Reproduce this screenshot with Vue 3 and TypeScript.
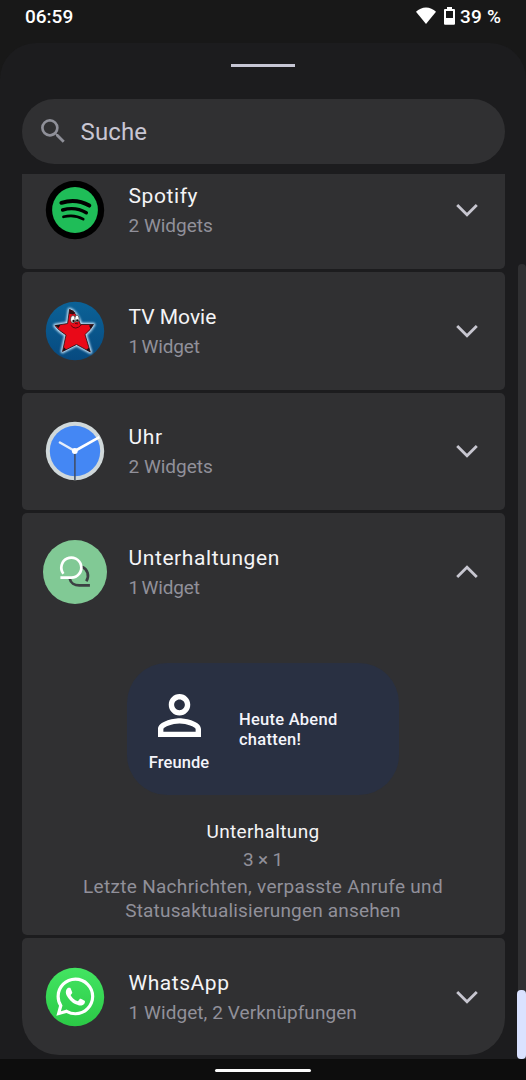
<script setup lang="ts">
interface AppEntry {
  id: 'spotify' | 'tv' | 'clock' | 'chat' | 'whatsapp'
  name: string
  summary: string
  single?: boolean
  open?: boolean
}

const apps: AppEntry[] = [
  { id: 'spotify', name: 'Spotify', summary: '2 Widgets' },
  { id: 'tv', name: 'TV Movie', summary: '1 Widget', single: true },
  { id: 'clock', name: 'Uhr', summary: '2 Widgets' },
  { id: 'chat', name: 'Unterhaltungen', summary: '1 Widget', single: true, open: true },
  { id: 'whatsapp', name: 'WhatsApp', summary: '1 Widget, 2 Verknüpfungen' },
]
</script>

<template>
  <div class="screen">
    <header class="status">
      <span class="time">06:59</span>
      <svg class="wifi" viewBox="0 0 20 17"><path d="M10 17 0 4.700C2.800 2 6.200 .4 10 .4S17.200 2 20 4.700z" /></svg>
      <svg class="battery" viewBox="0 0 11 18">
        <path fill-rule="evenodd" d="M3 0h5v2h2a1 1 0 0 1 1 1v13.700a1 1 0 0 1-1 1H1a1 1 0 0 1-1-1V3a1 1 0 0 1 1-1h2zM2 4v7h7V4z" />
      </svg>
      <span class="percent">39 %</span>
    </header>

    <main class="sheet">
      <div class="handle"></div>
      <div class="search">
        <svg viewBox="0 0 24 24"><path d="M15.500 14h-.79l-.28-.27A6.471 6.471 0 0 0 16 9.500 6.500 6.500 0 1 0 9.500 16c1.610 0 3.090-.59 4.230-1.570l.27.28v.79l5 4.990L20.490 19zm-6 0C7.010 14 5 11.990 5 9.500S7.010 5 9.500 5 14 7.010 14 9.500 11.990 14 9.500 14" /></svg>
        <span>Suche</span>
      </div>

      <div class="list">
        <section v-for="app in apps" :key="app.id" class="card" :class="[app.id, { open: app.open }]">
          <div class="row">
            <div class="icon">
              <svg v-if="app.id === 'spotify'" width="60" height="60" viewBox="0 0 60 60">
                <circle cx="30" cy="30" r="29.200" fill="#000" />
                <circle cx="30" cy="30" r="22.900" fill="#1fbd58" />
                <g fill="none" stroke="#000" stroke-linecap="round">
                  <path d="M16.400 22.800Q31.500 18.200 44.300 25.600" stroke-width="4" />
                  <path d="M17.600 30Q30.500 26.300 41.300 32.800" stroke-width="3.400" />
                  <path d="M18.500 36.800Q29.500 34 38.200 39.200" stroke-width="2.700" />
                </g>
              </svg>
              <svg v-else-if="app.id === 'tv'" width="60" height="60" viewBox="0 0 60 60">
                <defs>
                  <linearGradient id="tvSky" x1="0" y1="0" x2="0" y2="1">
                    <stop offset="0" stop-color="#0b6297" /><stop offset="1" stop-color="#074a80" />
                  </linearGradient>
                  <filter id="tvGlow" x="-20%" y="-20%" width="140%" height="140%"><feGaussianBlur stdDeviation=".8" /></filter>
                </defs>
                <circle cx="30" cy="30" r="29.200" fill="url(#tvSky)" />
                <path d="M24.500 8.500Q31 10.500 35.500 23.500L48.500 23.500Q46 28.500 40 33.500L45.300 51 31.500 43.500 17.500 50.500 21 34Q13.500 29.500 10 24.500L22.600 22.500z" fill="#d9efff" stroke="#c6e5fa" stroke-width="3.600" stroke-linejoin="round" filter="url(#tvGlow)" />
                <path d="M24.500 8.500Q31 10.500 35.500 23.500L48.500 23.500Q46 28.500 40 33.500L45.300 51 31.500 43.500 17.500 50.500 21 34Q13.500 29.500 10 24.500L22.600 22.500z" fill="#e90918" stroke="#1a0c10" stroke-width=".8" stroke-linejoin="round" />
                <path d="m10.300 24 5 .1-1.800 3zM48.400 23.700l-4.400.7 1.600 3.200zM17.700 50.300l1.200-4 2.300 2.300zM45 50.700l-1.300-4-2.400 2z" fill="#141014" />
                <path d="M24.500 8.300q3.500.8 6 3.800l-2.600 1.300-4-1z" fill="#321014" />
                <ellipse cx="28" cy="18.300" rx="2.500" ry="3.800" fill="#fff" stroke="#111" stroke-width=".6" />
                <ellipse cx="32" cy="17.600" rx="2.100" ry="3.500" fill="#fff" stroke="#111" stroke-width=".6" />
                <circle cx="28.500" cy="20" r="1.200" fill="#111" /><circle cx="32.200" cy="19.400" r="1.100" fill="#111" />
                <path d="M25.700 24.200q4.600 6 11-.6M30 22.400l3 .5" fill="none" stroke="#5b0710" stroke-width="1" />
              </svg>
              <svg v-else-if="app.id === 'clock'" width="60" height="60" viewBox="0 0 60 60">
                <circle cx="30" cy="30" r="29.200" fill="#d0d8da" />
                <circle cx="30" cy="30" r="25.200" fill="#4487f4" />
                <path d="M29.900 30v29" stroke="#414c60" stroke-width="1.500" />
                <path d="M29.800 30 14.900 21.500" stroke="#e5edfa" stroke-width="2.500" stroke-linecap="round" />
                <path d="M29.800 30 54.400 16.200" stroke="#fff" stroke-width="2.600" />
                <circle cx="29.800" cy="30" r="2.900" fill="#fff" />
              </svg>
              <svg v-else-if="app.id === 'chat'" width="64" height="64" viewBox="0 0 64 64">
                <circle cx="32" cy="32" r="32" fill="#81c995" />
                <g fill="none" stroke-width="2.700">
                  <path d="M39 26.800A9.700 9.700 0 0 1 43.300 41.200M26.800 38.700C27.500 42.700 31.500 45.400 36.300 45.400H46.900" stroke="#3c4043" />
                  <path d="M20.400 33.700A10 10 0 1 1 28.300 37.600H17.400" stroke="#fff" />
                </g>
              </svg>
              <svg v-else width="60" height="60" viewBox="0 0 60 60">
                <defs>
                  <linearGradient id="waGreen" x1="0" y1="0" x2="0" y2="1">
                    <stop offset="0" stop-color="#43e562" /><stop offset="1" stop-color="#2bc946" />
                  </linearGradient>
                </defs>
                <circle cx="30" cy="30" r="29.200" fill="url(#waGreen)" />
                <path transform="translate(11.300 10.600) scale(1.585)" fill="#fff" d="M17.472 14.382c-.297-.149-1.758-.867-2.03-.967-.273-.099-.471-.148-.67.15-.197.297-.767.966-.94 1.164-.173.199-.347.223-.644.075-.297-.15-1.255-.463-2.39-1.475-.883-.788-1.48-1.761-1.653-2.059-.173-.297-.018-.458.13-.606.134-.133.298-.347.446-.52.149-.174.198-.298.298-.497.099-.198.05-.371-.025-.52-.075-.149-.669-1.612-.916-2.207-.242-.579-.487-.5-.669-.51-.173-.008-.371-.01-.57-.01-.198 0-.52.074-.792.372-.272.297-1.04 1.016-1.04 2.479 0 1.462 1.065 2.875 1.213 3.074.149.198 2.096 3.2 5.077 4.487.709.306 1.262.489 1.694.625.712.227 1.36.195 1.871.118.571-.085 1.758-.719 2.006-1.413.248-.694.248-1.289.173-1.413-.074-.124-.272-.198-.57-.347m-5.421 7.403h-.004a9.87 9.87 0 01-5.031-1.378l-.361-.214-3.741.982.998-3.648-.235-.374a9.86 9.86 0 01-1.51-5.26c.001-5.45 4.436-9.884 9.888-9.884 2.64 0 5.122 1.03 6.988 2.898a9.825 9.825 0 012.893 6.994c-.003 5.45-4.437 9.884-9.885 9.884m8.413-18.297A11.815 11.815 0 0012.05 0C5.495 0 .16 5.335.157 11.892c0 2.096.547 4.142 1.588 5.945L.057 24l6.305-1.654a11.882 11.882 0 005.683 1.448h.005c6.554 0 11.89-5.335 11.893-11.893a11.821 11.821 0 00-3.48-8.413Z" />
              </svg>
            </div>
            <div class="labels">
              <div class="name">{{ app.name }}</div>
              <div class="summary" :class="{ single: app.single }">{{ app.summary }}</div>
            </div>
            <svg class="chevron" :class="{ up: app.open }" viewBox="0 0 24 14">
              <path d="m2.200 2 9.800 9.700L21.800 2" />
            </svg>
          </div>

          <div v-if="app.open" class="details">
            <div class="preview">
              <div class="person">
                <svg viewBox="4 4 16 16"><path d="M12 6c1.100 0 2 .9 2 2s-.9 2-2 2-2-.9-2-2 .9-2 2-2m0 9c2.700 0 5.800 1.290 6 2v1H6v-.99c.2-.72 3.300-2.010 6-2.010m0-11C9.790 4 8 5.790 8 8s1.790 4 4 4 4-1.790 4-4-1.790-4-4-4zm0 9c-2.670 0-8 1.340-8 4v3h16v-3c0-2.660-5.330-4-8-4z" /></svg>
                <span>Freunde</span>
              </div>
              <p class="message">Heute Abend<br />chatten!</p>
            </div>
            <div class="widget-name">Unterhaltung</div>
            <div class="widget-size">3 × 1</div>
            <p class="widget-text">Letzte Nachrichten, verpasste Anrufe und<br /><span>Statusaktualisierungen ansehen</span></p>
          </div>
        </section>
      </div>
      <div class="track"></div>
      <div class="thumb"></div>
    </main>

    <footer class="nav"><div class="pill"></div></footer>
  </div>
</template>

<style>
body {
  margin: 0;
  background: #181818;
}
</style>

<style scoped>
.screen {
  width: 526px;
  height: 1080px;
  overflow: hidden;
  display: flex;
  flex-direction: column;
  background: #181818;
  color: #f4f4f6;
  font-family: Roboto, "Open Sans", sans-serif;
}
.status {
  height: 43px;
  flex: none;
  box-sizing: border-box;
  display: flex;
  align-items: flex-start;
  padding: 5px 25px 0;
  font-size: 19px;
  line-height: 23px;
  font-weight: 500;
  color: #fff;
}
.time {
  margin-right: auto;
}
.wifi {
  width: 20px;
  height: 17px;
  margin: 2px 8px 0 0;
  fill: #fff;
}
.battery {
  width: 11px;
  height: 18px;
  margin: 2px 5px 0 0;
  fill: #fff;
}
.percent {
  width: 41px;
  white-space: nowrap;
  letter-spacing: 0.200px;
}
.sheet {
  position: relative;
  height: 1016px;
  flex: none;
  box-sizing: border-box;
  padding: 21px 21.500px 0;
  border-radius: 36px 36px 0 0;
  background: #1c1c1e;
}
.handle {
  width: 64px;
  height: 3px;
  margin: 0 auto;
  background: #c6c6d4;
}
.search {
  height: 64.500px;
  margin-top: 32px;
  box-sizing: border-box;
  display: flex;
  align-items: center;
  padding-left: 15.500px;
  border-radius: 33px;
  background: #303032;
  color: #c8c6d3;
  font-size: 24px;
  letter-spacing: 0.150px;
}
.search svg {
  width: 32.500px;
  height: 32.500px;
  margin-right: 11px;
  fill: #8f9099;
}
.search span {
  padding-top: 1px;
}
.list {
  height: 882px;
  margin-top: 10.500px;
  overflow: hidden;
  display: flex;
  flex-direction: column;
  gap: 3px;
}
.card {
  height: 117.670px;
  flex: none;
  border-radius: 5px;
  background: #303032;
}
.spotify {
  margin-top: -22.700px;
}
.chat {
  height: 421.500px;
}
.whatsapp {
  border-radius: 5px 5px 37px 37px;
}
.row {
  height: 117.670px;
  display: flex;
  align-items: center;
}
.icon {
  width: 107px;
  flex: none;
  display: flex;
  justify-content: center;
}
.icon svg {
  display: block;
}
.labels {
  flex: 1;
  white-space: nowrap;
}
.name {
  font-size: 21px;
  line-height: 30px;
  letter-spacing: 0.600px;
}
.tv .name {
  letter-spacing: 0;
}
.clock .name {
  letter-spacing: 0.700px;
}
.whatsapp .name {
  letter-spacing: 0.550px;
}
.summary {
  padding-top: 1px;
  margin-bottom: -1px;
  font-size: 19px;
  line-height: 28px;
  color: #91909a;
}
.single {
  letter-spacing: -0.150px;
  word-spacing: -2px;
}
.whatsapp .summary {
  letter-spacing: 0.070px;
}
.chevron {
  width: 24px;
  height: 14px;
  margin-right: 25.500px;
  fill: none;
  stroke: #c7c6d0;
  stroke-width: 2.800px;
}
.up {
  transform: rotate(180deg);
}
.details {
  padding-top: 32px;
  display: flex;
  flex-direction: column;
  align-items: center;
  text-align: center;
  font-size: 19px;
  color: #91909a;
}
.preview {
  width: 272px;
  height: 132px;
  box-sizing: border-box;
  display: flex;
  padding-left: 20px;
  border-radius: 40px;
  background: #293042;
  color: #f4f4fa;
  font-size: 16.500px;
  font-weight: 500;
}
.person {
  width: 64px;
  padding-top: 31.500px;
  display: flex;
  flex-direction: column;
  align-items: center;
}
.person svg {
  width: 43px;
  height: 43px;
  fill: #fff;
}
.person span {
  margin-top: 15.500px;
  line-height: 20px;
  letter-spacing: 0.100px;
}
.message {
  margin: 47px 0 0 28px;
  text-align: left;
  line-height: 20px;
  letter-spacing: 0.250px;
}
.widget-name {
  margin-top: 24px;
  line-height: 26px;
  letter-spacing: 0.350px;
  color: #f4f4f6;
}
.widget-size {
  margin-top: 2px;
  line-height: 26px;
  letter-spacing: -0.200px;
}
.widget-text {
  margin: 2px 0 0;
  line-height: 24px;
  letter-spacing: 0.300px;
}
.widget-text span {
  letter-spacing: 0.180px;
}
.track {
  position: absolute;
  right: 0;
  top: 221px;
  width: 8px;
  height: 795px;
  border-radius: 4px 4px 0 0;
  background: #303032;
}
.thumb {
  position: absolute;
  right: 0;
  bottom: 0;
  width: 9.500px;
  height: 69px;
  border-radius: 4px;
  background: #dae2ff;
}
.nav {
  height: 21px;
  display: flex;
  justify-content: center;
  background: #0d0d0d;
}
.pill {
  width: 96px;
  height: 3px;
  margin-top: 10px;
  border-radius: 2px;
  background: #fafafa;
}
</style>
